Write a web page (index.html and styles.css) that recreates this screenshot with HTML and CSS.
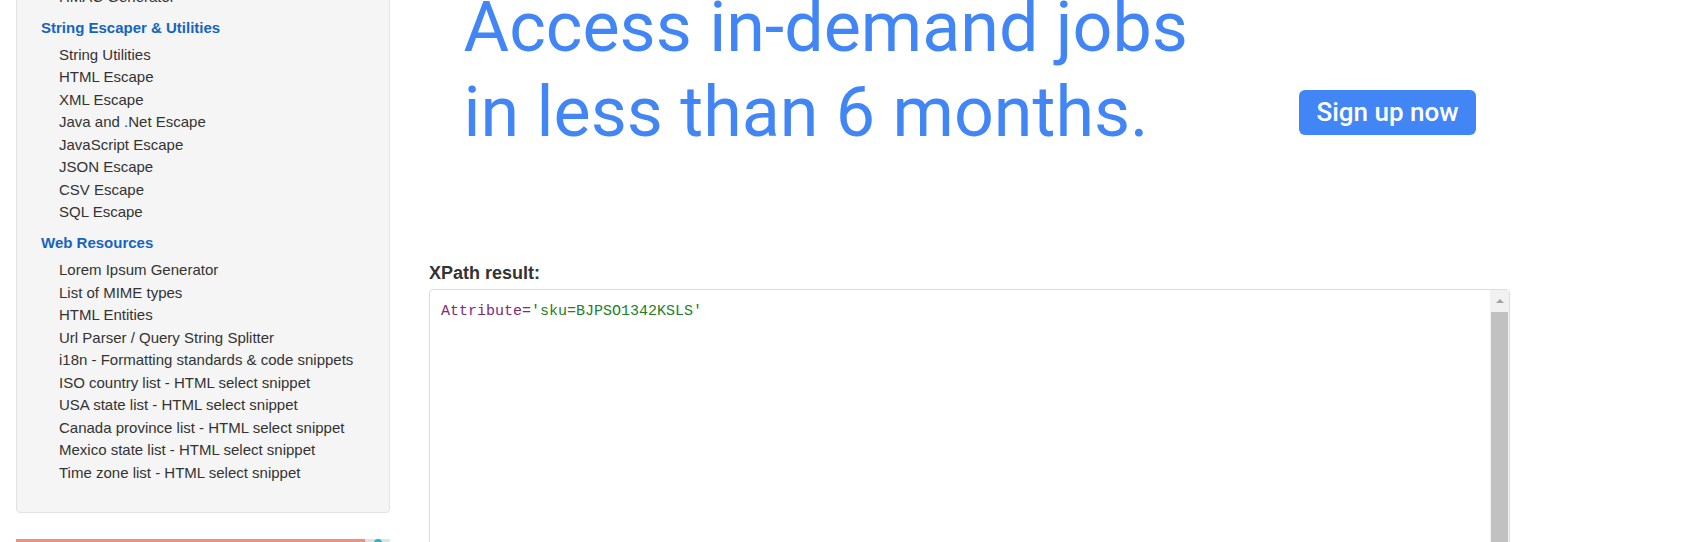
FILE: index.html
```html
<!DOCTYPE html>
<html lang="en">
<head>
<meta charset="utf-8">
<title>XPath Tester</title>
<link rel="stylesheet" href="styles.css">
</head>
<body>
<div class="page">
  <aside class="sidebar">
    <div class="well">
      <div class="nav-group">
        <ul class="nav-list">
          <li>HMAC Generator</li>
        </ul>
      </div>
      <div class="nav-group">
        <h4 class="nav-head">String Escaper &amp; Utilities</h4>
        <ul class="nav-list">
          <li>String Utilities</li>
          <li>HTML Escape</li>
          <li>XML Escape</li>
          <li>Java and .Net Escape</li>
          <li>JavaScript Escape</li>
          <li>JSON Escape</li>
          <li>CSV Escape</li>
          <li>SQL Escape</li>
        </ul>
      </div>
      <div class="nav-group">
        <h4 class="nav-head">Web Resources</h4>
        <ul class="nav-list">
          <li>Lorem Ipsum Generator</li>
          <li>List of MIME types</li>
          <li>HTML Entities</li>
          <li>Url Parser / Query String Splitter</li>
          <li>i18n - Formatting standards &amp; code snippets</li>
          <li>ISO country list - HTML select snippet</li>
          <li>USA state list - HTML select snippet</li>
          <li>Canada province list - HTML select snippet</li>
          <li>Mexico state list - HTML select snippet</li>
          <li>Time zone list - HTML select snippet</li>
        </ul>
      </div>
    </div>
    <div class="ad-bar"><div class="ad-bar-main"></div><div class="ad-bar-side"><span class="ad-dot"></span></div></div>
  </aside>
  <main class="main">
    <div class="ad">
      <div class="ad-text">
        <span class="ad-line">Access in-demand jobs</span>
        <span class="ad-line">in less than 6 months.</span>
      </div>
      <div class="ad-btn">Sign up now</div>
    </div>
    <h3 class="result-label">XPath result:</h3>
    <div class="result-box">
      <div class="code"><span class="tok-attr">Attribute=</span><span class="tok-str">'sku=BJPSO1342KSLS'</span></div>
      <div class="scrollbar">
        <div class="sb-up"><span class="sb-arrow"></span></div>
        <div class="sb-thumb"></div>
      </div>
    </div>
  </main>
</div>
</body>
</html>
```

FILE: styles.css
```css
html, body {
  margin: 0;
  padding: 0;
  background: #ffffff;
  overflow: hidden;
}

body {
  font-family: "Liberation Sans", Arial, sans-serif;
  color: #333333;
}

.page {
  display: flex;
  align-items: flex-start;
  padding-left: 16px;
}

.sidebar {
  width: 374px;
  flex: none;
}

.well {
  margin-top: -34px;
  padding: 19px 0 28px;
  background: #f5f5f5;
  border: 1px solid #e3e3e3;
  border-radius: 4px;
  box-shadow: inset 0 1px 1px rgba(0, 0, 0, 0.05);
}

.nav-head {
  margin: 8px 0 4.75px;
  padding-left: 24px;
  font-size: 15px;
  line-height: 22.5px;
  font-weight: bold;
  color: #1565c0;
}

.nav-list {
  list-style: none;
  margin: 0;
  padding: 0 0 0 42px;
}

.nav-list li {
  font-size: 15px;
  line-height: 22.5px;
  color: #333333;
  white-space: nowrap;
}

.ad-bar {
  margin-top: 26px;
  height: 10px;
  display: flex;
}

.ad-bar-main {
  flex: 1;
  background: #ec917f;
}

.ad-bar-side {
  width: 25px;
  background: #dde3e6;
  display: flex;
  justify-content: center;
}

.ad-dot {
  width: 8px;
  height: 8px;
  border-radius: 50%;
  background: #2fb3c8;
}

.main {
  margin-left: 39px;
  width: 1081px;
  flex: none;
}

.ad {
  display: flex;
  align-items: flex-start;
  height: 240px;
  padding-left: 34.5px;
}

.ad-text {
  margin-top: -15.5px;
  font-family: Roboto, "Open Sans", sans-serif;
  font-size: 70px;
  line-height: 85px;
  font-weight: 400;
  color: #4285f4;
  white-space: nowrap;
}

.ad-line {
  display: block;
}

.ad-btn {
  margin-left: auto;
  margin-right: 34px;
  margin-top: 90px;
  width: 177px;
  height: 45px;
  border-radius: 6px;
  background: #4285f4;
  color: #ffffff;
  font-family: Roboto, sans-serif;
  font-weight: 500;
  font-size: 26px;
  display: flex;
  align-items: center;
  justify-content: center;
  padding-bottom: 2px;
  box-sizing: border-box;
}

.result-label {
  margin: 23px 0 6px;
  font-size: 18px;
  line-height: 20px;
  font-weight: bold;
  color: #333333;
}

.result-box {
  display: flex;
  height: 320px;
  border: 1px solid #dddddd;
  border-radius: 4px;
  background: #ffffff;
}

.code {
  flex: 1;
  padding: 12px 11px;
  font-family: "Liberation Mono", "Courier New", monospace;
  font-size: 15px;
  line-height: 20px;
  white-space: pre;
}

.tok-attr {
  color: #7f2a7a;
}

.tok-str {
  color: #217f2a;
}

.scrollbar {
  width: 19px;
  flex: none;
  background: #f1f1f1;
  display: flex;
  flex-direction: column;
  align-items: center;
}

.sb-up {
  width: 100%;
  height: 22px;
  display: flex;
  align-items: center;
  justify-content: center;
}

.sb-arrow {
  width: 0;
  height: 0;
  border-left: 4px solid transparent;
  border-right: 4px solid transparent;
  border-bottom: 4px solid #a3a3a3;
}

.sb-thumb {
  flex: 1;
  width: 17px;
  background: #c1c1c1;
}
```
